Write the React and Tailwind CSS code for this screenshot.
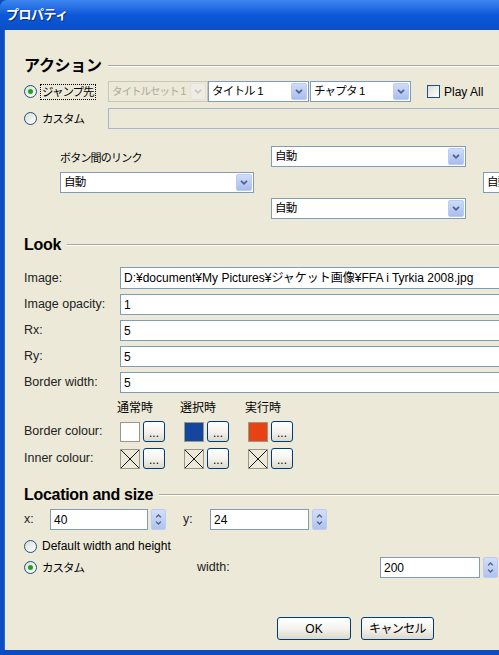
import React from "react";

const jp = { fontFamily: '"Liberation Sans", "Noto Sans CJK JP", sans-serif' };

function Chevron({ up = false, className = "" }) {
  return (
    <svg viewBox="0 0 8 5" className={className} fill="none">
      <path
        d={up ? "M1 4.2 L4 1.2 L7 4.2" : "M1 0.8 L4 3.8 L7 0.8"}
        stroke="currentColor"
        strokeWidth="1.7"
      />
    </svg>
  );
}

function Radio({ checked, label, focus, latin }) {
  return (
    <div className="flex items-center">
      <span className="w-[13px] h-[13px] rounded-full border border-[#1c5180] bg-gradient-to-br from-[#dcdcd6] to-white flex items-center justify-center">
        {checked && <span className="w-[5px] h-[5px] rounded-full bg-[#21a121]" />}
      </span>
      <span
        className={
          "ml-[3px] leading-[14px] px-[1px] " +
          (latin ? "text-[12px] " : "text-[11.5px] tracking-[-1px] ") +
          (focus ? "border border-dotted border-black" : "border border-transparent")
        }
      >
        {label}
      </span>
    </div>
  );
}

function Select({ value, w, disabled }) {
  return (
    <div
      className={
        "h-[21px] flex items-center border shrink-0 " +
        (disabled ? "border-[#c9c7ba] bg-[#ece9d8]" : "border-[#7f9db9] bg-white")
      }
      style={{ width: w }}
    >
      <span
        className={
          "flex-1 pl-[3px] whitespace-nowrap overflow-hidden " +
          (disabled
            ? "text-[10.5px] tracking-[-1px] text-[#aca899]"
            : "text-[11.5px] tracking-[-0.8px] text-black")
        }
      >
        {value}
      </span>
      <span
        className={
          "w-[16px] h-[17px] mr-[1px] rounded-[2px] border flex items-center justify-center " +
          (disabled
            ? "border-[#e4e2d8] bg-[#eeede5] text-[#c9c7ba]"
            : "border-[#bccbf1] bg-gradient-to-b from-[#cfdcfa] to-[#a9bdee] text-[#4d6185]")
        }
      >
        <Chevron className="w-[8px] h-[5px]" />
      </span>
    </div>
  );
}

function TextBox({ value, w, h = 21, disabled }) {
  return (
    <div
      className={
        "border shrink-0 flex items-center pl-[3px] text-[12px] whitespace-nowrap overflow-hidden " +
        (disabled ? "border-[#a8b8cc] bg-[#ece9d8]" : "border-[#7f9db9] bg-white")
      }
      style={{ width: w, height: h }}
    >
      {value}
    </div>
  );
}

function Spinner() {
  return (
    <div className="w-[15px] h-[21px] ml-[3px] shrink-0 rounded-[2px] border border-[#bccbf1] bg-gradient-to-b from-[#d3defa] to-[#b0c3ee] text-[#4d6185] flex flex-col items-center justify-center gap-[3px]">
      <Chevron up className="w-[7px] h-[4px]" />
      <Chevron className="w-[7px] h-[4px]" />
    </div>
  );
}

function XPButton({ children, w, h, className = "" }) {
  return (
    <div
      className={
        "rounded-[3px] border border-[#003c74] bg-gradient-to-b from-white via-[#f4f3ee] to-[#dcd9cc] flex items-center justify-center shrink-0 text-[12px] " +
        className
      }
      style={{ width: w, height: h }}
    >
      {children}
    </div>
  );
}

function Swatch({ color, cross }) {
  return (
    <div
      className="w-[20px] h-[20px] border border-[#9a9888] shrink-0 relative overflow-hidden"
      style={{ background: color || "transparent" }}
    >
      {cross && (
        <svg viewBox="0 0 20 20" className="absolute inset-0 w-full h-full">
          <path d="M0 0 L20 20 M20 0 L0 20" stroke="#000" strokeWidth="1" />
        </svg>
      )}
    </div>
  );
}

function Heading({ children, mt }) {
  return (
    <div className="flex items-center h-[20px]" style={{ marginTop: mt }}>
      <span className="text-[16px] font-bold tracking-[-0.3px] leading-[20px] text-black">{children}</span>
      <span className="flex-1 ml-[6px] border-t border-[#aca899] border-b border-b-white" />
    </div>
  );
}

function ColorGroup({ color, cross }) {
  return (
    <div className="w-[64px] flex items-center pl-[2px]">
      <Swatch color={color} cross={cross} />
      <XPButton w={22} h={21} className="ml-[3px] text-[10px] leading-[10px] pt-[3px]">...</XPButton>
    </div>
  );
}

export default function App() {
  return (
    <div className="w-[499px] h-[655px] overflow-hidden bg-[#0a4cc2] flex flex-col" style={jp}>
      <div className="h-[30px] shrink-0 rounded-tl-[7px] bg-gradient-to-b from-[#3d86f0] via-[#0b58d8] to-[#0a4fc6] flex items-center pl-[6px]">
        <span className="text-white font-bold text-[13px] tracking-[-0.5px] [text-shadow:1px_1px_0_#0a2a70]">
          プロパティ
        </span>
      </div>
      <div className="flex-1 ml-[4px] mb-[5px] bg-[#ece9d8] overflow-hidden border-l border-[#2a66d0]">
        <div className="w-[560px] pl-[19px] text-black flex flex-col">
          <Heading mt={26}>アクション</Heading>

          <div className="flex items-center mt-[5px]">
            <div className="w-[84px]">
              <Radio checked label="ジャンプ先" focus />
            </div>
            <Select value="タイトルセット 1" w={100} disabled />
            <Select value="タイトル 1" w={101} />
            <div className="w-[1px]" />
            <Select value="チャプタ 1" w={101} />
            <span className="ml-[16px] w-[13px] h-[13px] border border-[#1c5180] bg-gradient-to-br from-[#dcdcd6] to-white" />
            <span className="ml-[4px] text-[12px]">Play All</span>
          </div>

          <div className="flex items-center mt-[6px]">
            <div className="w-[84px]">
              <Radio label="カスタム" />
            </div>
            <TextBox value="" w={420} h={21} disabled />
          </div>

          <div className="pl-[36px] flex flex-col gap-[5px] mt-[17px]">
            <div className="flex items-start">
              <span className="w-[211px] text-[11px] tracking-[-0.8px] pt-[4px]">ボタン間のリンク</span>
              <Select value="自動" w={195} />
            </div>
            <div className="flex items-center">
              <Select value="自動" w={194} />
              <div className="w-[229px] shrink-0" />
              <Select value="自動" w={100} />
            </div>
            <div className="flex items-center">
              <div className="w-[211px] shrink-0" />
              <Select value="自動" w={195} />
            </div>
          </div>

          <Heading mt={16}>Look</Heading>

          <div className="flex flex-col gap-[5px] mt-[12px] text-[12px]">
            {[
              ["Image:", "D:¥document¥My Pictures¥ジャケット画像¥FFA i Tyrkia 2008.jpg"],
              ["Image opacity:", "1"],
              ["Rx:", "5"],
              ["Ry:", "5"],
              ["Border width:", "5"],
            ].map(([label, value]) => (
              <div key={label} className="flex items-center">
                <span className="w-[96px] text-[#222] text-[12.5px]">{label}</span>
                <TextBox value={value} w={420} h={label === "Image:" ? 22 : 21} />
              </div>
            ))}
          </div>

          <div className="flex mt-[8px] text-[12px] leading-[14px]">
            <div className="w-[93px]" />
            <span className="w-[63px]">通常時</span>
            <span className="w-[65px]">選択時</span>
            <span>実行時</span>
          </div>
          <div className="flex items-center mt-[6px] text-[12.5px]">
            <span className="w-[94px] text-[#222]">Border colour:</span>
            <ColorGroup color="#ffffff" />
            <ColorGroup color="#1446a0" />
            <ColorGroup color="#e84212" />
          </div>
          <div className="flex items-center mt-[6px] text-[12.5px]">
            <span className="w-[94px] text-[#222]">Inner colour:</span>
            <ColorGroup cross />
            <ColorGroup cross />
            <ColorGroup cross />
          </div>

          <Heading mt={16}>Location and size</Heading>

          <div className="flex items-center mt-[4px] text-[12.5px]">
            <span className="w-[26px] text-[#222]">x:</span>
            <TextBox value="40" w={98} />
            <Spinner />
            <span className="ml-[17px] w-[27px] text-[#222]">y:</span>
            <TextBox value="24" w={99} />
            <Spinner />
          </div>

          <div className="mt-[8px] h-[16px] flex items-center">
            <Radio latin label="Default width and height" />
          </div>

          <div className="flex items-center mt-[3px] text-[12.5px]">
            <div className="w-[173px]">
              <Radio checked label="カスタム" />
            </div>
            <span className="w-[183px] text-[#222]">width:</span>
            <TextBox value="200" w={100} />
            <Spinner />
          </div>

          <div className="flex mt-[39px] ml-[253px] gap-[10px]">
            <XPButton w={74} h={23}>OK</XPButton>
            <XPButton w={73} h={23} className="tracking-[-0.6px]">キャンセル</XPButton>
          </div>
        </div>
      </div>
    </div>
  );
}
